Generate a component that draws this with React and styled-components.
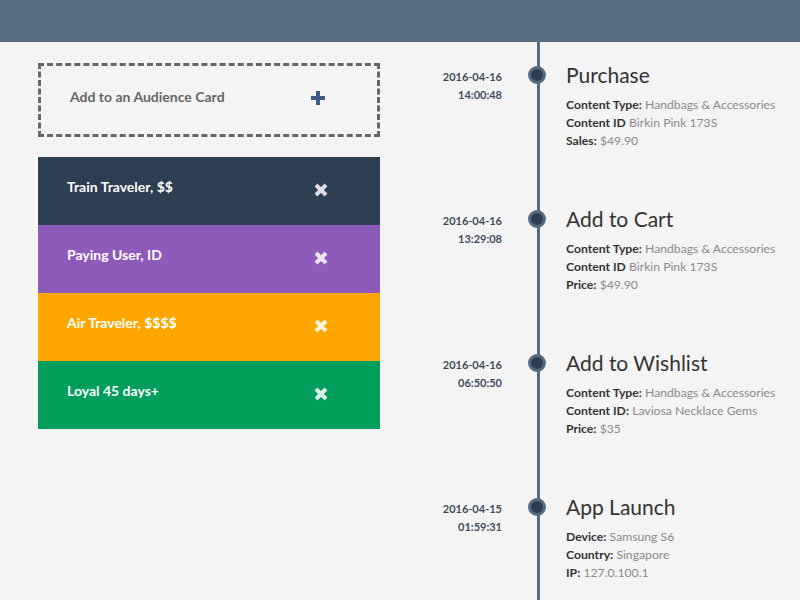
import React from 'react';
import styled, { createGlobalStyle } from 'styled-components';

const GlobalStyle = createGlobalStyle`
  html, body {
    margin: 0;
    padding: 0;
    background: #f4f4f4;
    font-family: Lato, "Open Sans", sans-serif;
  }
`;

const audiences = [
    { label: 'Train Traveler, $$', color: '#2c3e50', icon: '#dde0e3' },
    { label: 'Paying User, ID', color: '#8e5bbb', icon: '#ece4f3' },
    { label: 'Air Traveler, $$$$', color: '#ffa600', icon: '#fff2d9' },
    { label: 'Loyal 45 days+', color: '#009d5b', icon: '#dcefe5' },
];

const events = [
    {
        date: '2016-04-16', time: '14:00:48', title: 'Purchase',
        rows: [['Content Type:', 'Handbags & Accessories'], ['Content ID', 'Birkin Pink 173S'], ['Sales:', '$49.90']],
    },
    {
        date: '2016-04-16', time: '13:29:08', title: 'Add to Cart',
        rows: [['Content Type:', 'Handbags & Accessories'], ['Content ID', 'Birkin Pink 173S'], ['Price:', '$49.90']],
    },
    {
        date: '2016-04-16', time: '06:50:50', title: 'Add to Wishlist',
        rows: [['Content Type:', 'Handbags & Accessories'], ['Content ID:', 'Laviosa Necklace Gems'], ['Price:', '$35']],
    },
    {
        date: '2016-04-15', time: '01:59:31', title: 'App Launch',
        rows: [['Device:', 'Samsung S6'], ['Country:', 'Singapore'], ['IP:', '127.0.100.1']],
    },
];

const PlusIcon = () => (
    <svg width="16" height="16" viewBox="0 0 16 16">
        <path d="M8 1v14M1 8h14" stroke="#3c5a84" strokeWidth="4" />
    </svg>
);

const CrossIcon = ({ color }) => (
    <svg width="14" height="14" viewBox="0 0 14 14">
        <path d="M2 2l10 10M12 2L2 12" stroke={color} strokeWidth="4" />
    </svg>
);

const App = () => {
    return (
        <Page>
            <GlobalStyle />
            <Header />
            <Main>
                <LeftColumn>
                    <AddCard>
                        <AddLabel>Add to an Audience Card</AddLabel>
                        <AddButton>
                            <PlusIcon />
                        </AddButton>
                    </AddCard>
                    <CardList>
                        {audiences.map((a) => (
                            <AudienceCard key={a.label} bg={a.color}>
                                <CardLabel>{a.label}</CardLabel>
                                <RemoveButton>
                                    <CrossIcon color={a.icon} />
                                </RemoveButton>
                            </AudienceCard>
                        ))}
                    </CardList>
                </LeftColumn>
                <Timeline>
                    {events.map((e) => (
                        <Event key={e.title}>
                            <When>
                                <span>{e.date}</span>
                                <span>{e.time}</span>
                            </When>
                            <Rail>
                                <Dot />
                            </Rail>
                            <Body>
                                <EventTitle>{e.title}</EventTitle>
                                <Details>
                                    {e.rows.map(([k, v]) => (
                                        <Detail key={k}>
                                            <b>{k}</b> {v}
                                        </Detail>
                                    ))}
                                </Details>
                            </Body>
                        </Event>
                    ))}
                </Timeline>
            </Main>
        </Page>
    );
};

// Styled components
const Page = styled.div`
  width: 800px;
  height: 600px;
  overflow: hidden;
  display: flex;
  flex-direction: column;
`;

const Header = styled.div`
  height: 42px;
  flex-shrink: 0;
  background: #596d81;
`;

const Main = styled.div`
  flex: 1;
  display: flex;
`;

const LeftColumn = styled.div`
  width: 400px;
  box-sizing: border-box;
  padding: 21px 20px 0 38px;
  display: flex;
  flex-direction: column;
  gap: 20px;
`;

const AddCard = styled.div`
  height: 74px;
  box-sizing: border-box;
  border: 3px dashed #666;
  display: flex;
  align-items: center;
  justify-content: space-between;
  padding: 0 51px 0 29px;
`;

const AddLabel = styled.span`
  font-size: 14px;
  font-weight: 700;
  color: #666;
  margin-bottom: 8px;
`;

const AddButton = styled.span`
  display: flex;
  margin-bottom: 4px;
`;

const CardList = styled.div`
  display: flex;
  flex-direction: column;
`;

const AudienceCard = styled.div`
  height: 68px;
  box-sizing: border-box;
  background: ${(p) => p.bg};
  display: flex;
  align-items: flex-start;
  justify-content: space-between;
  padding: 20px 52px 0 29px;
`;

const CardLabel = styled.span`
  font-size: 14px;
  line-height: 20px;
  font-weight: 700;
  color: #fff;
`;

const RemoveButton = styled.span`
  display: flex;
  margin-top: 6px;
`;

const Timeline = styled.div`
  flex: 1;
  padding-top: 21px;
  background-image: linear-gradient(
    to right,
    transparent 137px,
    #566b80 137px,
    #566b80 140px,
    transparent 140px
  );
`;

const Event = styled.div`
  height: 144px;
  display: grid;
  grid-template-columns: 102px 64px 1fr;
`;

const When = styled.div`
  padding-top: 5px;
  display: flex;
  flex-direction: column;
  align-items: flex-end;
  font-size: 11px;
  line-height: 18px;
  font-weight: 700;
  color: #3e4c5c;
`;

const Rail = styled.div`
  display: flex;
  justify-content: center;
  padding-top: 3px;
  padding-left: 6px;
`;

const Dot = styled.span`
  width: 12px;
  height: 12px;
  border-radius: 50%;
  background: #2c3e50;
  border: 3px solid #566b80;
`;

const Body = styled.div`
  display: flex;
  flex-direction: column;
`;

const EventTitle = styled.div`
  font-size: 21px;
  line-height: 24px;
  color: #333;
`;

const Details = styled.div`
  margin-top: 9px;
`;

const Detail = styled.div`
  font-size: 12.2px;
  line-height: 18px;
  color: #8a8a8a;

  b {
    color: #333;
    font-weight: 700;
  }
`;

export default App;
